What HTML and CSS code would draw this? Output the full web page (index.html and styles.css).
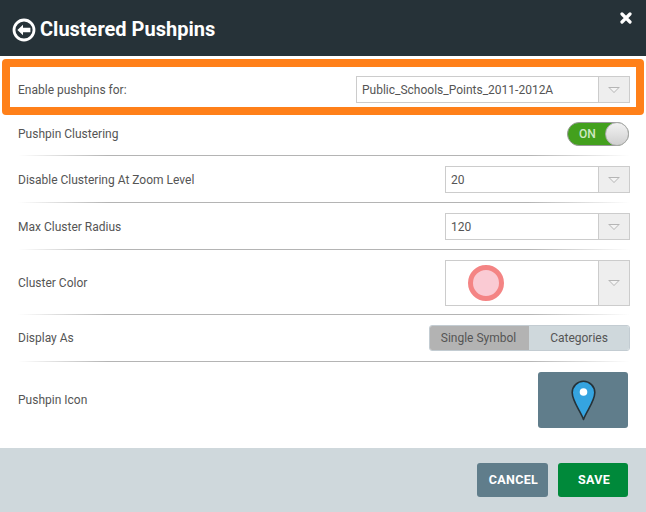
FILE: index.html
```html
<!DOCTYPE html>
<html lang="en">
<head>
<meta charset="utf-8">
<title>Clustered Pushpins</title>
<link rel="stylesheet" href="styles.css">
</head>
<body>
<div class="dialog">
  <header class="header">
    <div class="title-wrap">
      <svg class="back" viewBox="0 0 24 24" width="24" height="24" aria-hidden="true">
        <circle cx="12" cy="12" r="10" fill="none" stroke="#fff" stroke-width="2.8"/>
        <path d="M5.4 12 11 6.8V9.8H18.4V14.2H11V17.2Z" fill="#fff"/>
      </svg>
      <h1 class="title">Clustered Pushpins</h1>
    </div>
    <svg class="close" viewBox="0 0 12 12" width="12" height="12" aria-hidden="true">
      <path d="M2 2 10 10M10 2 2 10" stroke="#fff" stroke-width="3.2" stroke-linecap="round" fill="none"/>
    </svg>
  </header>
  <div class="highlight">
    <span class="label">Enable pushpins for:</span>
    <div class="select select-wide">
      <span class="select-value">Public_Schools_Points_2011-2012A</span>
      <span class="select-arrow"><i class="arrow"></i></span>
    </div>
  </div>
  <div class="row row-toggle">
    <span class="label">Pushpin Clustering</span>
    <div class="toggle"><span class="toggle-text">ON</span><span class="knob"></span></div>
  </div>
  <div class="row row-std">
    <span class="label">Disable Clustering At Zoom Level</span>
    <div class="select">
      <span class="select-value">20</span>
      <span class="select-arrow"><i class="arrow"></i></span>
    </div>
  </div>
  <div class="row row-std">
    <span class="label">Max Cluster Radius</span>
    <div class="select">
      <span class="select-value">120</span>
      <span class="select-arrow"><i class="arrow"></i></span>
    </div>
  </div>
  <div class="row row-color">
    <span class="label">Cluster Color</span>
    <div class="select select-tall">
      <span class="select-value color-value"><span class="swatch"></span></span>
      <span class="select-arrow"><i class="arrow"></i></span>
    </div>
  </div>
  <div class="row row-std row-display">
    <span class="label">Display As</span>
    <div class="segmented">
      <span class="seg seg-active">Single Symbol</span>
      <span class="seg seg-rest">Categories</span>
    </div>
  </div>
  <div class="row-icon">
    <span class="label">Pushpin Icon</span>
    <div class="icon-box">
      <svg viewBox="0 0 25 41" width="25" height="41" aria-hidden="true">
        <path d="M12.5 39.5C9.5 31 1.2 21.5 1.2 12.6A11.3 11.3 0 0 1 23.8 12.6C23.8 21.5 15.5 31 12.5 39.5Z" fill="#35a4e0" stroke="#263238" stroke-width="1.6" stroke-linejoin="round"/>
        <circle cx="12.5" cy="12" r="3.8" fill="#fff"/>
      </svg>
    </div>
  </div>
  <footer class="footer">
    <button class="btn btn-cancel" type="button">CANCEL</button>
    <button class="btn btn-save" type="button">SAVE</button>
  </footer>
</div>
</body>
</html>
```
FILE: styles.css
```css
* { box-sizing: border-box; }
html, body { margin: 0; padding: 0; }
body { width: 646px; height: 512px; overflow: hidden; background: #fff; font-family: Roboto, "Liberation Sans", sans-serif; }
.dialog { display: flex; flex-direction: column; width: 646px; height: 512px; }

.header { flex: 0 0 56px; min-height: 0; display: flex; justify-content: space-between; align-items: flex-start; background: #263238; padding: 18px 14px 0 12px; }
.title-wrap { display: flex; align-items: center; gap: 4px; }
.back { display: block; }
.title { margin: -2px 0 0; font-size: 20px; font-weight: 700; color: #fff; line-height: 24px; }
.close { margin-top: -6px; }

.highlight { flex: 0 0 56px; margin: 3px 2px 0; border: 8px solid #ff8019; border-radius: 4px; display: flex; align-items: center; justify-content: space-between; padding: 5px 6px 0 8px; }
.label { font-size: 12px; color: #555; }

.row { display: flex; align-items: center; justify-content: space-between; margin: 0 16px 0 18px; background: linear-gradient(to right, rgba(180,180,180,0) 0, #b4b4b4 90px, #b4b4b4 510px, rgba(180,180,180,0) 612px) no-repeat left bottom / 100% 1px; }
.row-toggle { flex: 0 0 41px; padding-bottom: 3px; }
.row-std { flex: 0 0 47px; }
.row-display { padding-bottom: 2px; }
.row-color { flex: 0 0 65px; }
.row-icon { flex: 0 0 86px; display: flex; align-items: center; justify-content: space-between; padding: 0 18px 10px; }

.select { display: flex; width: 185px; height: 27px; border: 1px solid #ccc; background: #fff; }
.select-wide { width: 274px; }
.select-tall { height: 46px; }
.select-value { flex: 1; display: flex; align-items: center; padding-left: 5px; font-size: 12px; color: #555; }
.select-arrow { flex: 0 0 31px; display: flex; align-items: center; justify-content: center; background: #eee; border-left: 1px solid #ccc; }
.arrow { position: relative; display: block; width: 0; height: 0; border-left: 6px solid transparent; border-right: 6px solid transparent; border-top: 6px solid #b5b5b5; }
.arrow::after { content: ""; position: absolute; left: -4px; top: -5px; width: 0; height: 0; border-left: 4px solid transparent; border-right: 4px solid transparent; border-top: 4px solid #f4f4f4; }
.color-value { padding-left: 22px; }
.swatch { display: block; width: 36px; height: 36px; border-radius: 50%; background: #facad3; border: 5px solid #f48484; }

.toggle { position: relative; display: flex; align-items: center; width: 62px; height: 24px; margin-right: 1px; border: 1px solid #999; border-radius: 12px; background: #43a01d; }
.toggle-text { padding-left: 11px; font-size: 12px; font-weight: 500; color: #cfe8c2; }
.knob { position: absolute; right: -1px; top: -1px; width: 24px; height: 24px; border-radius: 50%; background: linear-gradient(#f2f2f2, #d0d0d0); border: 1px solid #aaa; }

.segmented { display: flex; width: 201px; height: 26px; border: 1px solid #c3ccd2; border-radius: 3px; overflow: hidden; font-size: 12px; color: #555; }
.seg { display: flex; align-items: center; justify-content: center; }
.seg-active { flex: 0 0 99px; background: #b3b3b3; padding-right: 2px; }
.seg-rest { flex: 1; background: #cfd8dc; }

.icon-box { display: flex; align-items: center; justify-content: center; width: 90px; height: 56px; border-radius: 3px; background: #607d8b; }

.footer { flex: 1; display: flex; justify-content: flex-end; align-items: flex-start; gap: 10px; padding: 15px 18px 0 0; background: #cfd8dc; }
.btn { height: 34px; border: 0; border-radius: 3px; color: #fff; font-family: Roboto, "Liberation Sans", sans-serif; font-size: 12.5px; font-weight: 700; letter-spacing: 0.35px; padding: 0 0 1px 2px; }
.btn-cancel { width: 71px; background: #607d8b; }
.btn-save { width: 70px; background: #00893a; }
```
